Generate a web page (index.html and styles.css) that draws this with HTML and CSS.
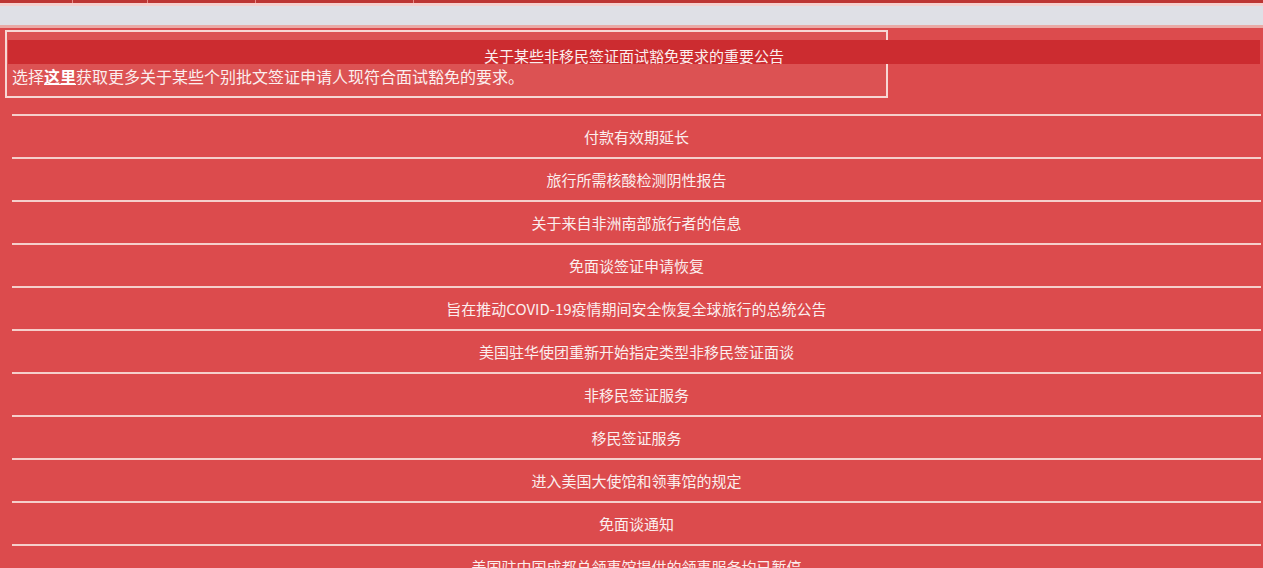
FILE: index.html
```html
<!DOCTYPE html>
<html lang="zh-CN">
<head>
<meta charset="utf-8">
<title>通知</title>
<link rel="stylesheet" href="styles.css">
</head>
<body>
<div class="topnav">
  <span class="tab t1"></span><span class="tab t2"></span><span class="tab t3"></span><span class="tab t4"></span><span class="tab t5"></span>
</div>
<div class="toolbar"></div>
<div class="notice">
  <div class="notice-title">关于某些非移民签证面试豁免要求的重要公告</div>
  <div class="notice-text">选择<a class="here" href="#">这里</a>获取更多关于某些个别批文签证申请人现符合面试豁免的要求。</div>
</div>
<ul class="rows">
  <li>付款有效期延长</li>
  <li>旅行所需核酸检测阴性报告</li>
  <li>关于来自非洲南部旅行者的信息</li>
  <li>免面谈签证申请恢复</li>
  <li>旨在推动COVID-19疫情期间安全恢复全球旅行的总统公告</li>
  <li>美国驻华使团重新开始指定类型非移民签证面谈</li>
  <li>非移民签证服务</li>
  <li>移民签证服务</li>
  <li>进入美国大使馆和领事馆的规定</li>
  <li>免面谈通知</li>
  <li>美国驻中国成都总领事馆提供的领事服务均已暂停</li>
</ul>
</body>
</html>
```

FILE: styles.css
```css
html, body {
  margin: 0;
  padding: 0;
}
body {
  background: #dc4b4d;
  font-family: "Noto Sans CJK SC", "Noto Sans", sans-serif;
  color: #fbeeee;
  overflow: hidden;
}
.topnav {
  display: flex;
  height: 3px;
  background: #bd3533;
}
.tab {
  height: 3px;
  border-right: 1px solid #e58a86;
}
.t1 { width: 72px; }
.t2 { width: 74px; }
.t3 { width: 107px; }
.t4 { width: 157px; }
.t5 { flex: 1; border-right: none; }
.toolbar {
  height: 19px;
  background: #dfe0e6;
  border-top: 3px solid #f6cfcd;
  border-bottom: 3px solid #e9aaa6;
}
.notice {
  width: 879px;
  margin: 2px 0 0 5px;
  border: 2px solid #f7d7d4;
  padding: 8px 0 8px 0;
  background: #dc5253;
}
.notice-title {
  width: 1252px;
  margin-left: 1px;
  height: 24px;
  line-height: 32px;
  background: #cc2c30;
  text-align: center;
  font-size: 15px;
  white-space: nowrap;
}
.notice-text {
  padding-left: 5px;
  line-height: 24px;
  font-size: 16px;
  white-space: nowrap;
}
.here {
  color: #ffffff;
  font-weight: bold;
  text-decoration: underline;
}
.rows {
  list-style: none;
  margin: 16px 0 0 12px;
  padding: 0;
  width: 1249px;
}
.rows li {
  border-top: 2px solid #f5cfcb;
  height: 41px;
  line-height: 41px;
  text-align: center;
  font-size: 15px;
  white-space: nowrap;
}
```
